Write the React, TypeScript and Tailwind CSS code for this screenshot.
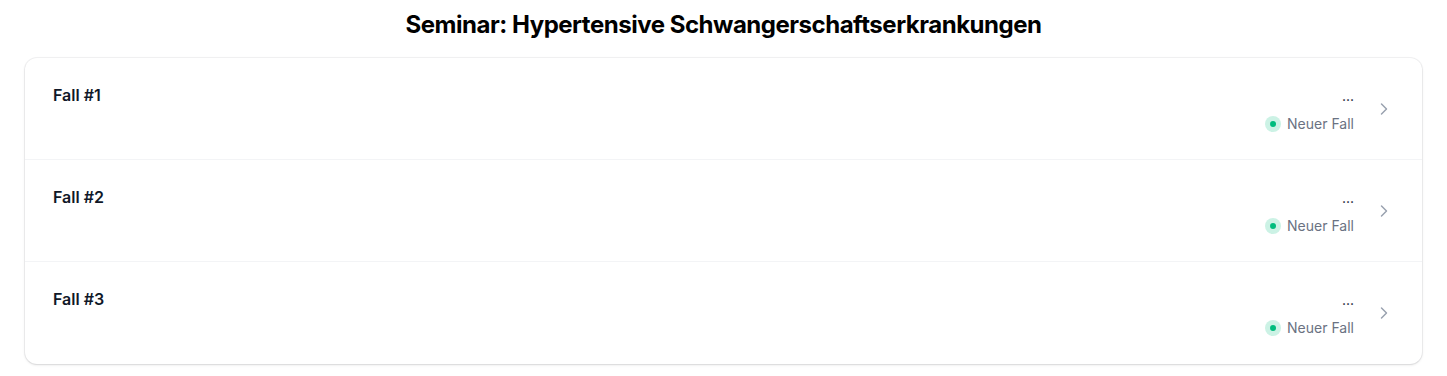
import { ChevronRight } from "lucide-react";

const cases = ["Fall #1", "Fall #2", "Fall #3"];

export default function App() {
  return (
    <div className="min-h-screen bg-white font-['Inter',sans-serif]">
      <h1 className="pt-[9px] text-center text-2xl leading-8 font-bold tracking-[-0.02em] text-black">
        Seminar: Hypertensive Schwangerschaftserkrankungen
      </h1>
      <ul className="mx-[25px] mt-[17px] divide-y divide-gray-100 overflow-hidden rounded-xl bg-white shadow-sm ring-1 ring-gray-900/5">
        {cases.map((name) => (
          <li key={name} className="flex h-[102px] items-start justify-between gap-x-5 px-7 pt-[25px]">
            <p className="text-base leading-6 font-semibold text-gray-900">{name}</p>
            <div className="flex items-center gap-x-5 pt-[1px]">
              <div className="flex flex-col items-end">
                <p className="text-sm leading-6 text-gray-900">...</p>
                <div className="mt-[6px] flex items-center gap-x-1.5">
                  <div className="flex h-4 w-4 items-center justify-center rounded-full bg-emerald-500/20">
                    <div className="h-1.5 w-1.5 rounded-full bg-emerald-500" />
                  </div>
                  <p className="text-sm leading-5 text-gray-500">Neuer Fall</p>
                </div>
              </div>
              <ChevronRight className="h-5 w-5 text-gray-400" strokeWidth={1.75} />
            </div>
          </li>
        ))}
      </ul>
    </div>
  );
}
